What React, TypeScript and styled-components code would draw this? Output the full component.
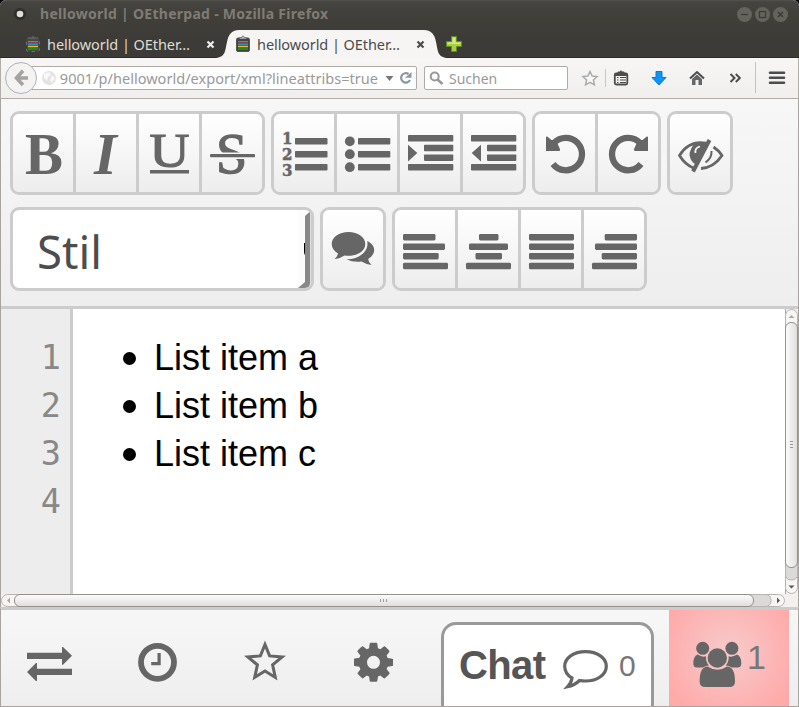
import React from "react";
import styled, { createGlobalStyle } from "styled-components";

const INK = "#666";
const LINE = "#ccc";

const Global = createGlobalStyle`
  * { box-sizing: border-box; }
  html, body { margin: 0; padding: 0; background: #000; }
  body { width: 799px; height: 707px; overflow: hidden; }
  svg { display: block; flex: none; }
`;

/* ---------- window ---------- */

const Window = styled.div`
  width: 799px;
  height: 707px;
  display: flex;
  flex-direction: column;
  overflow: hidden;
  border-radius: 6px 6px 0 0;
  background: #f2f1f0;
  font-family: "Noto Sans", "Open Sans", sans-serif;
`;

const Chrome = styled.header`
  flex: none;
  height: 58px;
  background: linear-gradient(#54524c 0, #454440 2px, #403f3a 16px, #3c3b37 40px);
  border-bottom: 1px solid #2c2b28;
`;

const TitleBar = styled.div`
  height: 30px;
  display: flex;
  align-items: center;
  padding: 0 11px 2px 12px;
`;

const Title = styled.h1`
  flex: 1;
  margin: 0 0 0 12px;
  font: 700 14px/20px "Noto Sans", sans-serif;
  letter-spacing: 0.28px;
  color: #7f7c75;
  white-space: nowrap;
`;

const TabStrip = styled.div`
  height: 27px;
  display: flex;
`;

const Tab = styled.div<{ $active?: boolean }>`
  position: relative;
  width: 210px;
  margin-left: ${p => (p.$active ? 0 : 18)}px;
  height: 28px;
  display: flex;
  align-items: center;
  padding-left: 7px;
  color: ${p => (p.$active ? "#4c4c4c" : "#dfdbd2")};
`;

const TabShape = styled.svg`
  position: absolute;
  left: -12px;
  top: 0;
  z-index: 0;
`;

const TabIcon = styled.svg`
  position: relative;
`;

const TabLabel = styled.span`
  position: relative;
  width: 159px;
  margin-left: 6px;
  font-size: 14.5px;
  letter-spacing: -0.07px;
  line-height: 20px;
  white-space: nowrap;
`;

const NewTab = styled.svg`
  margin: 6px 0 0 8px;
`;

const NavBar = styled.nav`
  flex: none;
  height: 41px;
  display: flex;
  align-items: center;
  border: solid #b2aea7;
  border-width: 0 1px 1px;
  background: linear-gradient(#f7f6f5, #f0efee);
`;

const BackButton = styled.div`
  position: relative;
  z-index: 1;
  width: 32px;
  height: 32px;
  margin-left: 4px;
  border: 1px solid #abb2b9;
  border-radius: 50%;
  background: #f4f3f2;
`;

const Field = styled.div<{ $w: number; $ml: number }>`
  width: ${p => p.$w}px;
  height: 24px;
  margin-left: ${p => p.$ml}px;
  border: 1px solid #b0aba4;
  border-radius: 2px;
  background: #fff;
  display: flex;
  align-items: center;
  font-size: 14px;
  color: #999;
  overflow: hidden;
  white-space: nowrap;
`;

const Url = styled.span`
  width: 320px;
  margin-left: 2px;
  height: 20px;
  line-height: 20px;
  display: flex;
  justify-content: flex-end;
  overflow: hidden;
  font-size: 14.5px;
  letter-spacing: 0.03px;
`;

const Hint = styled.span`
  margin-left: 4px;
  font-size: 14px;
  line-height: 22px;
  padding-top: 1px;
`;

/* ---------- editor toolbar ---------- */

const Toolbar = styled.section`
  flex: none;
  height: 210px;
  display: flex;
  flex-direction: column;
  gap: 12px;
  padding: 12px 0 0 9px;
  border: solid #a8a39d;
  border-width: 0 1px;
  background: linear-gradient(#f7f7f7, #eeeeee);
  box-shadow: inset 0 -3px ${LINE};
`;

const ToolRow = styled.div`
  display: flex;
  gap: 6px;
`;

const Group = styled.div`
  display: flex;
  height: 84px;
  border: 3px solid ${LINE};
  border-radius: 9px;
  overflow: hidden;
`;

const ToolButton = styled.button`
  width: 60px;
  height: 78px;
  padding: 0;
  border: 0;
  background: linear-gradient(#fff, #ededed);
  & + & {
    width: 63px;
    border-left: 3px solid ${LINE};
  }
`;

const StyleSelect = styled.div`
  width: 304px;
  height: 84px;
  display: flex;
  justify-content: space-between;
  border: 3px solid ${LINE};
  border-radius: 9px;
  overflow: hidden;
  background: #fff;
  padding-left: 24px;
  font: 45.5px/83px "Noto Sans", sans-serif;
  color: #4d4d4d;
`;

/* ---------- document ---------- */

const Editor = styled.main`
  flex: none;
  height: 285px;
  display: grid;
  grid-template-columns: 72px 1fr 13px;
  border: solid #a8a39d;
  border-width: 0 1px 0;
  background: #fff;
`;

const Gutter = styled.div`
  background: #ededed;
  border-right: 3px solid ${LINE};
  padding: 25px 9px 0 0;
  text-align: right;
  font: 33.5px/48px "DejaVu Sans Mono", monospace;
  color: #888;
`;

const Items = styled.ul`
  list-style: none;
  margin: 0;
  padding: 25px 0 0 50px;
  font: 36px/48px "Liberation Sans", Arial, sans-serif;
  color: #000;
`;

const Item = styled.li`
  display: flex;
  align-items: center;
  height: 48px;
  &::before {
    content: "";
    width: 13.4px;
    height: 13.4px;
    margin: 1px 17.6px 0 0;
    border-radius: 50%;
    background: #000;
  }
`;

const HScroll = styled.div`
  flex: none;
  height: 13px;
  border: solid #a8a39d;
  border-width: 0 1px;
`;

/* ---------- bottom bar ---------- */

const Footer = styled.footer`
  flex: none;
  height: 100px;
  display: flex;
  border: 1px solid #a8a39d;
  border-top: 3px solid ${LINE};
  background: linear-gradient(#f7f7f7, #eeeeee);
`;

const FooterButton = styled.button`
  width: 108px;
  height: 96px;
  padding: 0;
  border: 0;
  background: none;
`;

const ChatBox = styled.div`
  width: 213px;
  height: 84px;
  margin: 12px 15px 0 8px;
  display: flex;
  border: 3px solid #999;
  border-bottom: 0;
  border-radius: 15px 15px 0 0;
  background: #fff;
  font-family: "Liberation Sans", Arial, sans-serif;
`;

const ChatTitle = styled.strong`
  width: 101px;
  padding-left: 15px;
  font-size: 40px;
  letter-spacing: -0.6px;
  line-height: 80px;
  color: #555;
`;

const ChatCount = styled.span`
  padding-left: 9px;
  font-size: 30px;
  line-height: 81px;
  color: #777;
`;

const Users = styled.div`
  width: 120px;
  height: 96px;
  display: flex;
  background: radial-gradient(circle farthest-side at 50% 45%, #f7cbcb 0%, #ffaaaa 115%);
  font: 34px/94px "Liberation Sans", Arial, sans-serif;
  color: #777;
`;

/* ---------- drawings ---------- */

type Box = [number, number, number, number];
const Art = ({ box, children }: { box: Box; children: React.ReactNode }) => (
  <svg width={box[2]} height={box[3]} viewBox={box.join(" ")} fill={INK}>
    {children}
  </svg>
);

const Bars = ({ rows, h = 6.5, r = 0.8 }: { rows: number[][]; h?: number; r?: number }) => (
  <>
    {rows.map(([x1, x2, y]) => (
      <rect key={y + "-" + x1} x={x1} y={y} width={x2 - x1} height={h} rx={r} />
    ))}
  </>
);

const serif = '"Liberation Serif", "Times New Roman", serif';

const TurnArrow = () => (
  <>
    <path d="M553 164 A16.2 16.2 0 1 0 554 143" fill="none" stroke={INK} strokeWidth="6.3" />
    <path d="M546 137.200 Q546.300 136.200 547.500 136.800 L551.500 140 L556 140 L560 149.200 Q560.500 151 559 151 H546 Z" />
  </>
);

const Clipboard = ({ active }: { active?: boolean }) => (
  <TabIcon width="16" height="18" viewBox="0 0 16 18">
    <rect x="1.500" y="3" width="13" height="13.500" rx="1.500" fill={active ? "#45423f" : "#484642"} stroke={active ? "#555" : "#75716a"} strokeDasharray={active ? "none" : "3 4"} />
    <path d="M4.500 4V2.500h2l1-1.500h1l1 1.500h2V4z" fill={active ? "#bbb" : "#65625c"} stroke="#555" strokeWidth=".6" />
    <path d="M3 6.700h10" stroke="#e84c93" strokeWidth="1.300" />
    <path d="M3 9.200h10" stroke="#28a7df" strokeWidth="1.300" />
    <path d="M3 11.500h10" stroke="#efb92d" strokeWidth="1.300" />
    <path d="M3 14h10" stroke="#198a27" strokeWidth="2" />
  </TabIcon>
);

const Close = ({ color }: { color: string }) => (
  <TabIcon width="9" height="9" viewBox="0 0 9 9">
    <path d="M1.500 1.500l6 6M7.500 1.500l-6 6" stroke={color} strokeWidth="2.200" />
  </TabIcon>
);

const GEAR =
  "M1152 896q0-106-75-181t-181-75-181 75-75 181 75 181 181 75 181-75 75-181zm512-109v222q0 12-8 23t-20 13l-185 28q-19 54-39 91 35 50 107 138 10 12 10 25t-9 23q-27 37-99 108t-94 71q-12 0-26-9l-138-108q-44 23-91 38-16 136-29 186-7 28-36 28h-222q-14 0-24.500-8.500t-11.500-21.500l-28-184q-49-16-90-37l-141 107q-10 9-25 9-14 0-25-11-126-114-165-168-7-10-7-23 0-12 8-23 15-21 51-66.500t54-70.500q-27-50-41-99l-183-27q-13-2-21-12.500t-8-23.500v-222q0-12 8-23t19-13l186-28q14-46 39-92-40-57-107-138-10-12-10-24 0-10 9-23 26-36 98.500-107.500t94.500-71.500q13 0 26 10l138 107q44-23 91-38 16-136 29-186 7-28 36-28h222q14 0 24.500 8.500t11.500 21.500l28 184q49 16 90 37l142-107q9-9 24-9 13 0 25 10 129 119 165 170 7 8 7 22 0 12-8 23-15 21-51 66.500t-54 70.500q26 50 41 98l183 28q13 2 21 12.500t8 23.500z";

export default function App() {
  return (
    <>
      <Global />
      <Window>
        <Chrome>
          <TitleBar>
            <svg width="16" height="16" viewBox="0 0 16 16">
              <circle cx="8" cy="8" r="6" fill="#302f2c" />
              <circle cx="8" cy="8" r="3.300" fill="#e2dfd9" />
            </svg>
            <Title>helloworld | OEtherpad - Mozilla Firefox</Title>
            <svg width="52" height="16" viewBox="0 0 52 16">
              <g fill="#65635d">
                <circle cx="8.500" cy="8.500" r="7.500" />
                <circle cx="26.500" cy="8.500" r="7.500" />
                <circle cx="44.500" cy="8.500" r="7.500" />
              </g>
              <g stroke="#3c3b37" strokeWidth="1.200" fill="none">
                <path d="M5 8.500h7" />
                <rect x="23.500" y="5.500" width="6" height="6" />
                <path d="M42 6l5 5M47 6l-5 5" strokeWidth="1.600" />
              </g>
            </svg>
          </TitleBar>
          <TabStrip>
            <Tab>
              <Clipboard />
              <TabLabel>helloworld | OEther…</TabLabel>
              <Close color="#eee" />
            </Tab>
            <Tab $active>
              <TabShape width="234" height="28" viewBox="0 0 234 28">
                <path d="M0 28 C10 27 9 20 11 12 Q13 0 23 0 H208 Q218 0 220 12 C222 20 221 27 231 28Z" fill="#f6f5f4" />
              </TabShape>
              <Clipboard active />
              <TabLabel>helloworld | OEther…</TabLabel>
              <Close color="#4c4c4c" />
            </Tab>
            <NewTab width="16" height="16" viewBox="0 0 16 16">
              <path d="M5.500 .5h5v5h5v5h-5v5h-5v-5h-5v-5h5z" fill="#a9cf3c" stroke="#5d8f27" />
              <path d="M6.500 1.500h3v5h5v1.500h-13V6.500h5z" fill="#d3e88c" />
            </NewTab>
          </TabStrip>
        </Chrome>

        <NavBar>
          <BackButton>
            <svg width="30" height="30" viewBox="0 0 30 30">
              <path d="M17 7.800 L10.500 15 L17 22 M10.500 15 H22" fill="none" stroke="#a3a3a3" strokeWidth="3.600" />
            </svg>
          </BackButton>
          <Field $w={387} $ml={-7}>
            <svg width="25" height="22" viewBox="30 0 25 22">
              <circle cx="48" cy="11" r="7" fill="#e3e3e3" />
              <path d="M43 7l5-2 2 3-3 2-1 4-3-3zM51 8l3 3-3 5-2-3z" fill="#f8f8f8" />
            </svg>
            <Url>9001/p/helloworld/export/xml?lineattribs=true</Url>
            <svg width="38" height="22" viewBox="0 0 38 22">
              <path d="M7.500 9h8l-4 5z" fill="#777" />
              <path d="M30.500 7 A4.700 4.700 0 1 0 32 13" fill="none" stroke="#8997a5" strokeWidth="2.200" />
              <path d="M27 10.800h6.500V5z" fill="#8997a5" />
            </svg>
          </Field>
          <Field $w={144} $ml={7}>
            <svg width="20" height="22" viewBox="0 0 20 22">
              <circle cx="9.700" cy="9.500" r="4" fill="none" stroke="#999" strokeWidth="2" />
              <path d="M12.500 12.500l5 4.500" stroke="#999" strokeWidth="2.600" />
            </svg>
            <Hint>Suchen</Hint>
          </Field>
          <svg width="230" height="40" viewBox="568 58 230 40">
            <path d="M590 71.500l2.100 4.500 5 .6-3.700 3.400 1 4.900-4.400-2.500-4.400 2.500 1-4.900-3.700-3.400 5-.6z" fill="#f7f7f7" stroke="#aaa" strokeWidth="1.500" />
            <path d="M605.500 69v18" stroke="#c8c8c8" />
            <rect x="614.800" y="73.500" width="12.500" height="11" rx="1.500" fill="none" stroke="#4c4c4c" strokeWidth="1.800" />
            <path d="M617 73.500l1-2h2l1-1.500 1 1.500h2l1 2zM614 76h14v-2h-14z" fill="#4c4c4c" />
            <path d="M617 77.500h1.500M617 80h1.500M617 82.500h1.500M620 77.500h6M620 80h6M620 82.500h6" stroke="#4c4c4c" strokeWidth="1.200" />
            <path d="M656 71.500h6v6h4L659 85l-7-7.500h4z" fill="#0996f8" stroke="#0878df" strokeLinejoin="round" />
            <path d="M690 78.500l7-6.500 7 6.500" fill="none" stroke="#4c4c4c" strokeWidth="2" />
            <path d="M692 79l5-4.500 5 4.500v6h-3.500v-5h-3v5H692z" fill="#666" />
            <path d="M730.500 74l4 4-4 4M735.800 74l4 4-4 4" fill="none" stroke="#4c4c4c" strokeWidth="2" />
            <path d="M755.500 62v31" stroke="#bcc3ca" />
            <path d="M770 72.800h14M770 77.800h14M770 82.800h14" stroke="#4c4c4c" strokeWidth="2.600" strokeLinecap="round" />
          </svg>
        </NavBar>

        <Toolbar>
          <ToolRow>
            <Group>
              <ToolButton aria-label="Bold">
                <Art box={[13, 114, 60, 78]}>
                  <text x="25" y="173.500" fontFamily={serif} fontWeight="700" fontSize="58.500" textLength="38" lengthAdjust="spacingAndGlyphs">B</text>
                </Art>
              </ToolButton>
              <ToolButton aria-label="Italic">
                <Art box={[76, 114, 60, 78]}>
                  <text x="94" y="173.500" fontFamily={serif} fontStyle="italic" fontWeight="700" fontSize="58.500">I</text>
                </Art>
              </ToolButton>
              <ToolButton aria-label="Underline">
                <Art box={[139, 114, 60, 78]}>
                  <text x="149.500" y="166.500" fontFamily={serif} fontSize="48" textLength="40" lengthAdjust="spacingAndGlyphs" stroke={INK} strokeWidth="1.200">U</text>
                  <rect x="150" y="170" width="39" height="3.500" />
                </Art>
              </ToolButton>
              <ToolButton aria-label="Strikethrough">
                <Art box={[202, 114, 60, 78]}>
                  <text x="216" y="172.500" fontFamily={serif} fontSize="56" stroke={INK} strokeWidth="1.400">S</text>
                  <rect x="209" y="152.500" width="47" height="6.500" fill="#f6f6f6" />
                  <rect x="210" y="154" width="45" height="3.200" rx="1" />
                </Art>
              </ToolButton>
            </Group>
            <Group>
              <ToolButton aria-label="Ordered list">
                <Art box={[274, 114, 60, 78]}>
                  <Bars rows={[[295, 327.5, 138], [295, 327.5, 151], [295, 327.5, 164]]} />
                  <g fontFamily='"DejaVu Serif", serif' fontWeight="700" fontSize="16.500" stroke={INK} strokeWidth=".5">
                    <text x="282" y="144.200" textLength="10.500" lengthAdjust="spacingAndGlyphs">1</text>
                    <text x="282" y="160.200" textLength="10.500" lengthAdjust="spacingAndGlyphs">2</text>
                    <text x="282" y="176.300" textLength="10.500" lengthAdjust="spacingAndGlyphs">3</text>
                  </g>
                </Art>
              </ToolButton>
              <ToolButton aria-label="Unordered list">
                <Art box={[337, 114, 60, 78]}>
                  <Bars rows={[[358, 390.3, 138], [358, 390.3, 151], [358, 390.3, 164]]} />
                  <circle cx="349.800" cy="141.300" r="4.900" />
                  <circle cx="349.800" cy="154.200" r="4.900" />
                  <circle cx="349.800" cy="167.200" r="4.900" />
                </Art>
              </ToolButton>
              <ToolButton aria-label="Indent">
                <Art box={[400, 114, 60, 78]}>
                  <Bars rows={[[408, 453.3, 135], [424, 453.3, 144.8], [424, 453.3, 154.4], [408, 453.3, 164]]} />
                  <path d="M408 144.700l9.300 8.300-9.300 8.500z" />
                </Art>
              </ToolButton>
              <ToolButton aria-label="Outdent">
                <Art box={[463, 114, 60, 78]}>
                  <Bars rows={[[471, 516.3, 135], [487, 516.3, 144.8], [487, 516.3, 154.4], [471, 516.3, 164]]} />
                  <path d="M481 144.700l-9.300 8.300 9.300 8.500z" />
                </Art>
              </ToolButton>
            </Group>
            <Group>
              <ToolButton aria-label="Undo">
                <Art box={[535, 114, 60, 78]}>
                  <TurnArrow />
                </Art>
              </ToolButton>
              <ToolButton aria-label="Redo">
                <Art box={[598, 114, 60, 78]}>
                  <g transform="translate(1194 0) scale(-1 1)">
                    <TurnArrow />
                  </g>
                </Art>
              </ToolButton>
            </Group>
            <Group>
              <ToolButton aria-label="Toggle authorship colors">
                <Art box={[670, 114, 60, 78]}>
                  <g fill="none" stroke={INK} strokeWidth="2.800">
                    <path d="M706 143.200 Q689 140 679.500 155.500 Q685 164.500 693.500 168" />
                    <path d="M713.500 147 Q719 150.500 722 155.500 Q714 167.500 701 168.500" />
                    <path d="M709.500 140 L693 171.500" strokeWidth="4" />
                    <path d="M711.500 151 Q712 158 705.500 162.500" strokeWidth="2" />
                  </g>
                  <path d="M694 144 Q687 153 691 160 Q693 163 696 164.500 L706 144z" />
                  <path d="M695.500 153 Q694.500 148 700 146.500" fill="none" stroke="#f7f7f7" strokeWidth="1.800" />
                </Art>
              </ToolButton>
            </Group>
          </ToolRow>
          <ToolRow>
            <StyleSelect>
              <span>Stil</span>
              <svg width="13" height="78" viewBox="298 210 13 78">
                <rect x="298" y="210" width="7" height="78" fill="#fcfcfc" />
                <path d="M305 216l5-4.500V283q0 5-5 5h-7l7-6z" fill="#888" />
                <rect x="310" y="210" width="1" height="78" fill="#ddd" />
                <path d="M304 243h1v12q-1-1-1-4z" fill="#000" />
              </svg>
            </StyleSelect>
            <Group>
              <ToolButton aria-label="Comments">
                <Art box={[323, 210, 60, 78]}>
                  <path d="M348.500 232 C358 232 365.300 237.300 365.300 244 S358 255.800 348.500 255.800 Q346.500 255.800 344.500 255.500 Q340 258.700 334.500 259 Q337.500 256.500 338 253.400 C334 251.200 331.700 247.800 331.700 244 C331.700 237.300 339 232 348.500 232z" />
                  <path d="M367.200 241 C371.500 243 374.200 246.300 374.200 250 C374.200 253.500 372 256.600 368.200 258.900 Q368.500 262.500 371.500 265 Q366 264.500 361.500 261.600 Q353 262.700 346.500 259.300 C357.500 259.600 369.500 252.500 367.200 241z" />
                </Art>
              </ToolButton>
            </Group>
            <Group>
              <ToolButton aria-label="Align left">
                <Art box={[395, 210, 60, 78]}>
                  <Bars r={1.4} rows={[[403, 435.5, 234], [403, 445, 243.5], [403, 438.7, 253], [403, 448, 262.8]]} />
                </Art>
              </ToolButton>
              <ToolButton aria-label="Align center">
                <Art box={[458, 210, 60, 78]}>
                  <Bars r={1.4} rows={[[479, 498.5, 234], [469, 508, 243.5], [475.5, 502, 253], [466, 511, 262.8]]} />
                </Art>
              </ToolButton>
              <ToolButton aria-label="Justify">
                <Art box={[521, 210, 60, 78]}>
                  <Bars r={1.4} rows={[[529, 574, 234], [529, 574, 243.5], [529, 574, 253], [529, 574, 262.8]]} />
                </Art>
              </ToolButton>
              <ToolButton aria-label="Align right">
                <Art box={[584, 210, 60, 78]}>
                  <Bars r={1.4} rows={[[604.7, 637, 234], [595, 637, 243.5], [601.7, 637, 253], [592, 637, 262.8]]} />
                </Art>
              </ToolButton>
            </Group>
          </ToolRow>
        </Toolbar>

        <Editor>
          <Gutter>
            <div>1</div>
            <div>2</div>
            <div>3</div>
            <div>4</div>
          </Gutter>
          <Items>
            <Item>List item a</Item>
            <Item>List item b</Item>
            <Item>List item c</Item>
          </Items>
          <svg width="13" height="285" viewBox="785 309 13 285">
            <defs>
              <linearGradient id="v"><stop stopColor="#fdfdfd" /><stop offset="1" stopColor="#dfdddc" /></linearGradient>
            </defs>
            <rect x="785" y="309" width="13" height="285" fill="#f2f1f0" />
            <path d="M785.500 309v285" stroke="#aaa6a1" />
            <rect x="785.500" y="309.500" width="12" height="284" rx="6" fill="#f7f6f5" stroke="#b8b4af" />
            <path d="M785.500 560h12v14q0 6-6 6t-6-6z" fill="#dcdad8" stroke="#b8b4af" />
            <rect x="785.500" y="322.500" width="12" height="245" rx="5.500" fill="url(#v)" stroke="#96918b" />
            <path d="M788.500 318l3-3 3 3z" fill="#aaa" />
            <path d="M788.500 585.500h6l-3 3z" fill="#555" />
            <path d="M790 441.500h3M790 444.500h3M790 447.500h3" stroke="#999" />
          </svg>
        </Editor>
        <HScroll>
          <svg width="797" height="13" viewBox="1 594 797 13">
            <defs>
              <linearGradient id="h" x2="0" y2="1"><stop stopColor="#fdfdfd" /><stop offset="1" stopColor="#dfdddc" /></linearGradient>
            </defs>
            <rect x="1" y="594" width="797" height="13" fill="#f2f1f0" />
            <rect x="1.500" y="594.500" width="783" height="12" rx="6" fill="#f7f6f5" stroke="#b8b4af" />
            <path d="M745 594.500h20q6 0 6 6t-6 6h-20z" fill="#dcdad8" stroke="#b8b4af" />
            <rect x="14.500" y="594.500" width="739" height="12" rx="5.500" fill="url(#h)" stroke="#96918b" />
            <path d="M10 597.500v6l-3-3z" fill="#aaa" />
            <path d="M777 597.500v6l3-3z" fill="#555" />
            <path d="M380.500 599v3M383.500 599v3M386.500 599v3" stroke="#999" />
          </svg>
        </HScroll>

        <Footer>
          <FooterButton aria-label="Import/Export">
            <Art box={[1, 610, 108, 96]}>
              <path d="M27 652.700H62V647l1 0 9 8.800-9 8.900h-1V659H27zM72 668.700H37V663h-1l-9 8.900 9 9.100h1V675H72z" />
            </Art>
          </FooterButton>
          <FooterButton aria-label="Timeslider">
            <Art box={[109, 610, 108, 96]}>
              <circle cx="157.500" cy="662.300" r="16.500" fill="none" stroke={INK} strokeWidth="5.800" />
              <path d="M157.500 653h3.200v12.200h-9.500V662h6.300z" />
            </Art>
          </FooterButton>
          <FooterButton aria-label="Saved revision">
            <Art box={[217, 610, 108, 96]}>
              <path d="M265 644.500l4.600 11.400 12.600 1-9.600 8 2.700 12.500-10.300-6.400-10.300 6.400 2.700-12.500-9.600-8 12.600-1z" fill="none" stroke={INK} strokeWidth="3" />
            </Art>
          </FooterButton>
          <FooterButton aria-label="Settings">
            <Art box={[325, 610, 108, 96]}>
              <path transform="translate(350.750 639.550) scale(.0254)" d={GEAR} />
            </Art>
          </FooterButton>
          <ChatBox>
            <ChatTitle>Chat</ChatTitle>
            <Art box={[545, 625, 65, 80]}>
              <path d="M585.500 651.700 C597.500 651.700 606.300 658 606.300 666.300 S597.500 681 585.500 681 Q582.500 681 579.500 680.500 Q574.500 685.500 567.500 686.800 Q571.500 682.500 572 678 C567.500 675.500 564.700 671 564.700 666.300 C564.700 658 573.500 651.700 585.500 651.700z" fill="none" stroke={INK} strokeWidth="3.200" />
            </Art>
            <ChatCount>0</ChatCount>
          </ChatBox>
          <Users>
            <Art box={[669, 610, 78, 96]}>
              <circle cx="702.700" cy="648.300" r="6.500" />
              <circle cx="731.900" cy="648.300" r="6.500" />
              <circle cx="717.300" cy="658" r="9.700" />
              <path d="M697.500 654.500Q702 657.500 706 656.300Q705.500 662 709 665.500Q705.500 665.700 703.200 667.600H697Q693.300 667.500 693.300 663Q693.300 656.500 697.500 654.500z" />
              <path d="M737.100 654.500Q732.600 657.500 728.600 656.300Q729.100 662 725.600 665.500Q729.100 665.700 731.400 667.600H737.600Q741.300 667.500 741.300 663Q741.300 656.500 737.100 654.500z" />
              <path d="M707.500 666.500Q717.300 673 727.100 666.500Q735 667 735 681.500Q735 687 729 687H705.600Q699.600 687 699.600 681.500Q699.600 667 707.500 666.500z" />
            </Art>
            <span>1</span>
          </Users>
        </Footer>
      </Window>
    </>
  );
}
